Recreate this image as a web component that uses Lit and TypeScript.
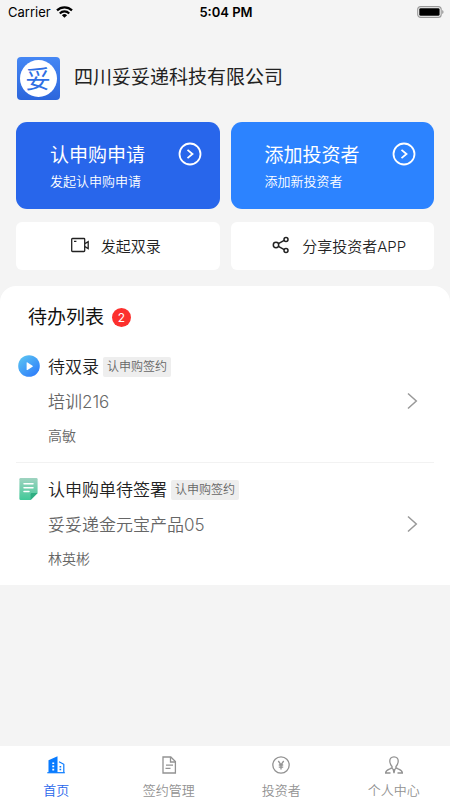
import { LitElement, html, css, svg, TemplateResult } from "lit";
import { customElement } from "lit/decorators.js";
import { classMap } from "lit/directives/class-map.js";

interface Todo {
  title: string;
  tag: string;
  product: string;
  person: string;
  icon: TemplateResult;
}

const playIcon = html`<svg class="todo-icon" viewBox="0 0 22 22" aria-hidden="true">
  <defs>
    <linearGradient id="play" x1="0.1" y1="0" x2="0.9" y2="1">
      <stop offset="0" stop-color="#5cc6f2" />
      <stop offset="1" stop-color="#2b78fb" />
    </linearGradient>
  </defs>
  <circle cx="11" cy="11" r="10.8" fill="url(#play)" />
  <path d="M8.600 8v6.400q0 1 .9.5l5-3.100q.7-.6 0-1.100L9.500 7.500q-.9-.5-.9.5z" fill="#fff" />
</svg>`;

const sheetIcon = html`<svg class="todo-icon" viewBox="0 0 22 22" aria-hidden="true">
  <defs>
    <linearGradient id="sheet" x1="0" y1="0" x2="0" y2="1">
      <stop offset="0" stop-color="#9fd3c0" />
      <stop offset="1" stop-color="#41c998" />
    </linearGradient>
  </defs>
  <path d="M2.600 0h15.800q1.200 0 1.200 1.200v13.800l-7 7H2.600q-1.200 0-1.200-1.200V1.200Q1.400 0 2.600 0z" fill="url(#sheet)" />
  <path d="M12.600 22v-5.800q0-1.200 1.200-1.200h5.800z" fill="#2fae82" />
  <path d="M6 5.800h9M6 9.800h9M6 13.500h5" stroke="#fff" stroke-width="1.500" stroke-linecap="round" />
</svg>`;

const todos: Todo[] = [
  { title: "待双录", tag: "认申购签约", product: "培训216", person: "高敏", icon: playIcon },
  { title: "认申购单待签署", tag: "认申购签约", product: "妥妥递金元宝产品05", person: "林英彬", icon: sheetIcon },
];

const tabs = [
  {
    label: "首页",
    active: true,
    icon: svg`<path d="M1.500 16.500V4.300L10.500.3v16.200z" fill="currentColor"/>
      <path d="M12 5.700l4.800 2.600v8.200" fill="none" stroke="currentColor" stroke-width="1.200"/>
      <path d="M.3 16.700h17.500" stroke="currentColor" stroke-width="1.200"/>
      <path d="M5.300 7.200h1.900M5.300 10.400h1.900M5.300 13.600h1.900" stroke="#fff" stroke-width="1.600"/>
      <path d="M12.500 10.800h1.700M12.500 13.500h1.700" stroke="currentColor" stroke-width="1.400"/>`,
  },
  {
    label: "签约管理",
    active: false,
    icon: svg`<g fill="none" stroke="currentColor" stroke-width="1.300">
      <path d="M3 1h7.800L15.400 5.600V17H3z"/><path d="M10.500 1v5h5"/><path d="M6 9.200h7M5.500 12.300h5"/></g>`,
  },
  {
    label: "投资者",
    active: false,
    icon: svg`<g fill="none" stroke="currentColor" stroke-width="1.300">
      <circle cx="9" cy="9" r="8.200"/><path d="M6.300 5l2.700 3.800L11.700 5M9 8.800v4.700M6.800 9h4.400M6.800 11.200h4.400"/></g>`,
  },
  {
    label: "个人中心",
    active: false,
    icon: svg`<g fill="none" stroke="currentColor" stroke-width="1.300">
      <path d="M9 .8c-3 0-4.300 2-4.200 4.500.1 2.400 1 3.800 2.200 5.200.5 1-.2 1.600-1.600 2.200C2.500 13.800.7 14 .6 17h4.900"/>
      <path d="M9 .8c3 0 4.300 2 4.200 4.500-.1 2.400-1 3.800-2.200 5.200-.5 1 .2 1.600 1.600 2.200 2.900 1.100 4.700 1.300 4.800 4.300h-4.900"/>
      <path d="M6.800 12.200L9 14l2.200-1.800M8.300 13.800L9 17l.7-3.200"/></g>`,
  },
];

@customElement("app-root")
export class AppRoot extends LitElement {
  static styles = css`
    :host {
      display: flex;
      flex-direction: column;
      min-height: 100vh;
      background: #f4f4f4;
      color: #222;
      font-family: Inter, "Noto Sans CJK SC", sans-serif;
      --blue: #2866eb;
    }
    * {
      box-sizing: border-box;
    }
    h1, h2, h3, p, ul {
      margin: 0;
      padding: 0;
    }
    a {
      color: inherit;
      text-decoration: none;
    }
    button {
      border: 0;
      font: inherit;
      color: inherit;
      cursor: pointer;
    }
    svg {
      display: block;
      flex: none;
    }
    .status {
      display: grid;
      grid-template-columns: 1fr auto 1fr;
      align-items: center;
      height: 24px;
      padding: 0 6px 0 8px;
      font-size: 13px;
      color: #000;
    }
    .carrier {
      display: flex;
      align-items: center;
      gap: 5px;
    }
    .time {
      font-weight: 600;
    }
    .wifi {
      width: 17px;
      height: 12px;
    }
    .battery {
      width: 27px;
      height: 12px;
      justify-self: end;
    }
    .company {
      display: flex;
      align-items: center;
      gap: 14px;
      padding: 33px 16px 22px;
    }
    .logo {
      width: 44px;
      height: 43px;
    }
    .logo text {
      font-family: "Noto Sans CJK SC", sans-serif;
      font-size: 25px;
      font-weight: 400;
    }
    .company h1 {
      font-size: 19px;
      line-height: 28px;
      font-weight: 400;
      padding-bottom: 2px;
    }
    .actions {
      display: grid;
      grid-template-columns: 1fr 1fr;
      gap: 13px 11px;
      padding: 0 16px 16px;
    }
    .primary {
      display: flex;
      justify-content: space-between;
      align-items: flex-start;
      height: 87px;
      padding: 20px 18px 0 34px;
      border-radius: 11px;
      background: var(--blue);
      color: #fff;
      text-align: left;
    }
    .primary.light {
      background: #2c83ff;
    }
    .primary .name {
      display: block;
      font-size: 19px;
      line-height: 28px;
      font-weight: 400;
    }
    .primary .hint {
      display: block;
      font-size: 13px;
      line-height: 22px;
      font-weight: 350;
    }
    .primary svg {
      width: 24px;
      height: 24px;
    }
    .secondary {
      display: flex;
      justify-content: center;
      align-items: center;
      gap: 12px;
      height: 48px;
      padding: 0 4px 2px 0;
      border-radius: 6px;
      background: #fff;
      font-size: 15px;
      font-weight: 350;
    }
    .secondary.share {
      padding: 0 0 2px 14px;
    }
    .secondary svg {
      width: 18px;
      height: 18px;
    }
    .todo {
      background: #fff;
      border-radius: 16px 16px 0 0;
    }
    .todo header {
      display: flex;
      align-items: center;
      gap: 8px;
      padding: 16px 28px 8px;
    }
    .todo h2 {
      padding-top: 2px;
      font-size: 19px;
      line-height: 28px;
      font-weight: 400;
      color: #111;
    }
    .count {
      width: 19px;
      border-radius: 50%;
      background: #fc302d;
      color: #fff;
      font-size: 12px;
      line-height: 19px;
      text-align: center;
    }
    .todo ul {
      list-style: none;
      padding: 0 16px;
    }
    .todo li + li {
      border-top: 1px solid #f2f2f2;
    }
    .row {
      display: grid;
      grid-template-columns: 22px 1fr 12px;
      column-gap: 8px;
      align-items: center;
      padding: 15px 16px 16px 2px;
      font-weight: 350;
    }
    .todo-icon {
      width: 22px;
      height: 22px;
      align-self: start;
    }
    .title {
      display: flex;
      align-items: center;
      gap: 4px;
      line-height: 24px;
    }
    .title h3 {
      font-size: 17px;
      font-weight: 350;
    }
    .tag {
      padding: 0 4px;
      border-radius: 2px;
      background: #eee;
      color: #666;
      font-size: 12px;
      line-height: 20px;
    }
    .product {
      margin-top: 11px;
      font-size: 17px;
      line-height: 24px;
      color: #666;
    }
    .person {
      margin-top: 12px;
      font-size: 14px;
      line-height: 20px;
      color: #666;
    }
    .chevron {
      width: 12px;
      height: 18px;
    }
    nav {
      display: grid;
      grid-template-columns: repeat(4, 1fr);
      margin-top: auto;
      background: #fff;
    }
    .tab {
      display: flex;
      flex-direction: column;
      align-items: center;
      gap: 6px;
      padding: 10px 0 0;
      font-size: 13px;
      line-height: 20px;
      font-weight: 350;
      color: #929292;
    }
    .tab svg {
      width: 18px;
      height: 18px;
    }
    .tab.active {
      color: var(--blue);
    }
    .tab.active svg {
      color: #087bff;
    }
  `;

  private arrow() {
    return html`<svg viewBox="0 0 24 24" fill="none" stroke="#fff" aria-hidden="true">
      <circle cx="12" cy="12" r="10.500" stroke-width="1.800" />
      <path d="M9.500 7.900l5 4.100-5 4.100" stroke-width="1.800" />
    </svg>`;
  }

  render() {
    return html`
      <div class="status">
        <span class="carrier">Carrier
          <svg class="wifi" viewBox="0 0 17 12" aria-hidden="true">
            <g fill="none" stroke="#000" stroke-width="2.200">
              <path d="M1 4.400a10.600 10.600 0 0 1 15 0" />
              <path d="M3.800 7.400a6.600 6.600 0 0 1 9.400 0" />
            </g>
            <path d="M8.500 11.800L5.900 9.200a3.700 3.700 0 0 1 5.200 0z" />
          </svg>
        </span>
        <span class="time">5:04 PM</span>
        <svg class="battery" viewBox="0 0 27 12" aria-hidden="true">
          <rect x="0.700" y="0.600" width="23.500" height="10.800" rx="3" fill="none" stroke="#999" stroke-width="1.100" />
          <rect x="2.300" y="2.200" width="20.300" height="7.600" rx="1.400" />
          <path d="M25.200 4c1.800.6 1.800 3.400 0 4z" fill="#999" />
        </svg>
      </div>

      <div class="company">
        <svg class="logo" viewBox="0 0 44 43" role="img" aria-label="妥妥递">
          <defs>
            <linearGradient id="logo" x1="0" y1="0" x2="0" y2="1">
              <stop offset="0" stop-color="#4587f4" />
              <stop offset="1" stop-color="#2c66dc" />
            </linearGradient>
          </defs>
          <rect x="1" width="43" height="43" rx="4" fill="url(#logo)" />
          <circle cx="22.500" cy="21.500" r="18.500" fill="#fff" />
          <text x="22" y="31" text-anchor="middle" fill="#2f6fe4">妥</text>
        </svg>
        <h1>四川妥妥递科技有限公司</h1>
      </div>

      <div class="actions">
        <button class="primary">
          <span><span class="name">认申购申请</span><span class="hint">发起认申购申请</span></span>
          ${this.arrow()}
        </button>
        <button class="primary light">
          <span><span class="name">添加投资者</span><span class="hint">添加新投资者</span></span>
          ${this.arrow()}
        </button>
        <button class="secondary">
          <svg viewBox="0 0 18 18" fill="none" stroke="#222" stroke-width="1.300" aria-hidden="true">
            <rect x="0.700" y="2.500" width="13" height="13" rx="0.800" />
            <path d="M13.900 7.600l3.300-2v7l-3.300-2M3 5.400h2.400" />
          </svg>
          发起双录
        </button>
        <button class="secondary share">
          <svg viewBox="0 0 18 18" fill="none" stroke="#222" stroke-width="1.500" aria-hidden="true">
            <circle cx="4" cy="9" r="2.700" />
            <circle cx="14" cy="3.400" r="2" />
            <circle cx="14" cy="14.600" r="2" />
            <path d="M6.400 7.700l5.800-3.300M6.400 10.300l5.800 3.300" />
          </svg>
          分享投资者APP
        </button>
      </div>

      <section class="todo">
        <header>
          <h2>待办列表</h2>
          <span class="count">2</span>
        </header>
        <ul>
          ${todos.map(
            (t) => html`<li>
              <a class="row" href="#">
                ${t.icon}
                <div>
                  <div class="title"><h3>${t.title}</h3><span class="tag">${t.tag}</span></div>
                  <p class="product">${t.product}</p>
                  <p class="person">${t.person}</p>
                </div>
                <svg class="chevron" viewBox="0 0 12 18" fill="none" stroke="#999" stroke-width="1.500" aria-hidden="true">
                  <path d="M2 1.500l8.300 7.500L2 16.500" />
                </svg>
              </a>
            </li>`
          )}
        </ul>
      </section>

      <nav>
        ${tabs.map(
          (t) => html`<a href="#" class=${classMap({ tab: true, active: t.active })}>
            <svg viewBox="0 0 18 18" aria-hidden="true">${t.icon}</svg>
            <span>${t.label}</span>
          </a>`
        )}
      </nav>
    `;
  }
}
